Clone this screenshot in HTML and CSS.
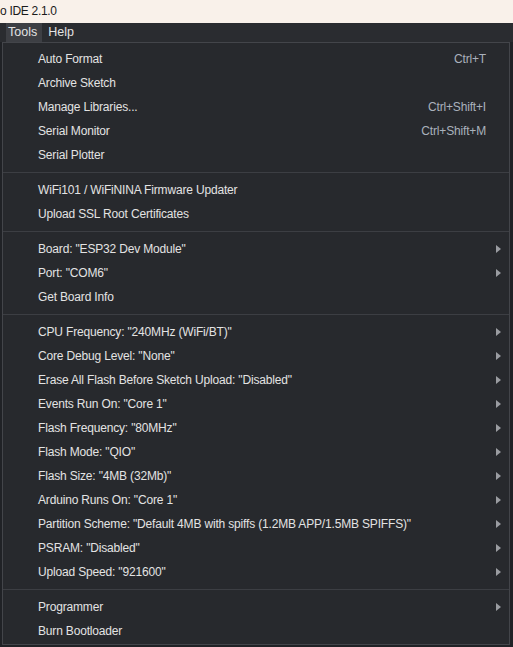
FILE: index.html
```html
<!DOCTYPE html>
<html>
<head>
<meta charset="utf-8">
<link rel="stylesheet" href="styles.css">
</head>
<body>
<div class="titlebar">o IDE 2.1.0</div>
<div class="menubar">
  <span class="mb-item active">Tools</span>
  <span class="mb-item">Help</span>
</div>
<div class="stage">
  <div class="menu">
    <div class="item"><span class="label">Auto Format</span><span class="key">Ctrl+T</span></div>
    <div class="item"><span class="label">Archive Sketch</span></div>
    <div class="item"><span class="label">Manage Libraries...</span><span class="key">Ctrl+Shift+I</span></div>
    <div class="item"><span class="label">Serial Monitor</span><span class="key">Ctrl+Shift+M</span></div>
    <div class="item"><span class="label">Serial Plotter</span></div>
    <div class="sep"></div>
    <div class="item"><span class="label">WiFi101 / WiFiNINA Firmware Updater</span></div>
    <div class="item"><span class="label">Upload SSL Root Certificates</span></div>
    <div class="sep"></div>
    <div class="item sub"><span class="label">Board: "ESP32 Dev Module"</span></div>
    <div class="item sub"><span class="label">Port: "COM6"</span></div>
    <div class="item"><span class="label">Get Board Info</span></div>
    <div class="sep"></div>
    <div class="item sub"><span class="label">CPU Frequency: "240MHz (WiFi/BT)"</span></div>
    <div class="item sub"><span class="label">Core Debug Level: "None"</span></div>
    <div class="item sub"><span class="label">Erase All Flash Before Sketch Upload: "Disabled"</span></div>
    <div class="item sub"><span class="label">Events Run On: "Core 1"</span></div>
    <div class="item sub"><span class="label">Flash Frequency: "80MHz"</span></div>
    <div class="item sub"><span class="label">Flash Mode: "QIO"</span></div>
    <div class="item sub"><span class="label">Flash Size: "4MB (32Mb)"</span></div>
    <div class="item sub"><span class="label">Arduino Runs On: "Core 1"</span></div>
    <div class="item sub"><span class="label">Partition Scheme: "Default 4MB with spiffs (1.2MB APP/1.5MB SPIFFS)"</span></div>
    <div class="item sub"><span class="label">PSRAM: "Disabled"</span></div>
    <div class="item sub"><span class="label">Upload Speed: "921600"</span></div>
    <div class="sep"></div>
    <div class="item sub"><span class="label">Programmer</span></div>
    <div class="item"><span class="label">Burn Bootloader</span></div>
  </div>
</div>
</body>
</html>
```
FILE: styles.css
```css
html, body {
  margin: 0;
  padding: 0;
  background: #1f2124;
  font-family: "Liberation Sans", Arial, sans-serif;
  font-size: 12px;
}
.titlebar {
  height: 23px;
  line-height: 23px;
  background: #f9f1ea;
  color: #1a1a1a;
  font-size: 12px;
  letter-spacing: -0.3px;
}
.menubar {
  height: 19px;
  background: #2a2c30;
  display: flex;
  align-items: stretch;
  padding-left: 6px;
}
.mb-item {
  color: #e2e2e2;
  padding: 0 6px 0 0;
  line-height: 19px;
  font-size: 12.5px;
}
.mb-item.active {
  background: #3d3f44;
  padding: 0 5px 0 2px;
  margin-right: 6px;
}
.stage {
  background: #202226;
  padding: 0 3px 2px 2px;
}
.menu {
  background: #27292d;
  border: 1px solid #43454a;
  padding: 4px 0 1px 0;
  color: #e3e3e3;
  letter-spacing: -0.17px;
}
.item {
  height: 24px;
  display: flex;
  align-items: center;
  padding: 0 23px 0 35px;
  position: relative;
}
.label {
  flex: 1;
  white-space: nowrap;
}
.key {
  color: #aab1bc;
}
.item.sub::after {
  content: "";
  position: absolute;
  right: 8px;
  top: 8px;
  border-left: 5px solid #9a9ca1;
  border-top: 4px solid transparent;
  border-bottom: 4px solid transparent;
}
.sep {
  height: 1px;
  background: #3c3e43;
  margin: 5px 0 5px 0;
}
```
